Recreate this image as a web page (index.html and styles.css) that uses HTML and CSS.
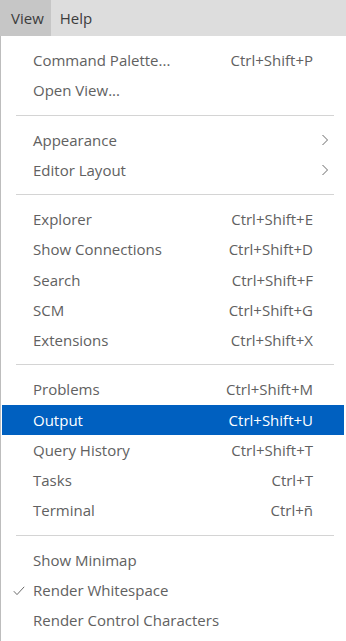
FILE: index.html
```html
<!DOCTYPE html>
<html>
<head>
<meta charset="utf-8">
<link rel="stylesheet" href="styles.css">
</head>
<body>
<div class="menubar">
  <div class="mb-item active">View</div>
  <div class="mb-item">Help</div>
</div>
<div class="menu">
  <div class="row"><span class="label">Command Palette...</span><span class="key">Ctrl+Shift+P</span></div>
  <div class="row"><span class="label">Open View...</span></div>
  <div class="sep"></div>
  <div class="row"><span class="label">Appearance</span><span class="chev"><svg width="8" height="12" viewBox="0 0 8 12"><path d="M1.5 1 L6.5 6 L1.5 11" fill="none" stroke="#6a6a6a" stroke-width="1"/></svg></span></div>
  <div class="row"><span class="label">Editor Layout</span><span class="chev"><svg width="8" height="12" viewBox="0 0 8 12"><path d="M1.5 1 L6.5 6 L1.5 11" fill="none" stroke="#6a6a6a" stroke-width="1"/></svg></span></div>
  <div class="sep"></div>
  <div class="row"><span class="label">Explorer</span><span class="key">Ctrl+Shift+E</span></div>
  <div class="row"><span class="label">Show Connections</span><span class="key">Ctrl+Shift+D</span></div>
  <div class="row"><span class="label">Search</span><span class="key">Ctrl+Shift+F</span></div>
  <div class="row"><span class="label">SCM</span><span class="key">Ctrl+Shift+G</span></div>
  <div class="row"><span class="label">Extensions</span><span class="key">Ctrl+Shift+X</span></div>
  <div class="sep"></div>
  <div class="row"><span class="label">Problems</span><span class="key">Ctrl+Shift+M</span></div>
  <div class="row selected"><span class="label">Output</span><span class="key">Ctrl+Shift+U</span></div>
  <div class="row"><span class="label">Query History</span><span class="key">Ctrl+Shift+T</span></div>
  <div class="row"><span class="label">Tasks</span><span class="key">Ctrl+T</span></div>
  <div class="row"><span class="label">Terminal</span><span class="key">Ctrl+ñ</span></div>
  <div class="sep"></div>
  <div class="row"><span class="label">Show Minimap</span></div>
  <div class="row"><span class="check"><svg width="12" height="10" viewBox="0 0 12 10"><path d="M0.8 5.2 L4 8.6 L11.2 0.8" fill="none" stroke="#6a6a6a" stroke-width="1"/></svg></span><span class="label">Render Whitespace</span></div>
  <div class="row"><span class="label">Render Control Characters</span></div>
</div>
</body>
</html>
```
FILE: styles.css
```css
html, body {
  margin: 0;
  padding: 0;
  background: #ffffff;
}
body {
  font-family: "Open Sans", "Noto Sans", sans-serif;
  font-size: 15px;
  width: 346px;
  height: 641px;
  overflow: hidden;
}
.menubar {
  display: flex;
  height: 36px;
  background: #dddddd;
}
.mb-item {
  display: flex;
  align-items: center;
  padding: 0 8px 0 9px;
  color: #3c3c3c;
  font-size: 15px;
}
.mb-item.active {
  background: #c6c6c6;
  padding: 0 7px 0 11px;
}
.menu {
  border-left: 1px solid #bdbdbd;
  padding-top: 9px;
  height: 600px;
}
.row {
  position: relative;
  display: flex;
  align-items: center;
  height: 30.25px;
  margin: 0 2px 0 1px;
  padding: 0 31px 0 31px;
  color: #616161;
}
.row .label {
  flex: 1;
}
.row .key {
  color: #616161;
}
.row.selected {
  background: #0060c0;
  color: #ffffff;
}
.row.selected .key {
  color: #ffffff;
}
.chev {
  position: absolute;
  right: 15px;
  top: 9px;
  line-height: 0;
}
.check {
  position: absolute;
  left: 11px;
  top: 11px;
  line-height: 0;
}
.sep {
  height: 1px;
  background: #d4d4d4;
  margin: 9px 12px 9px 15px;
}
```
